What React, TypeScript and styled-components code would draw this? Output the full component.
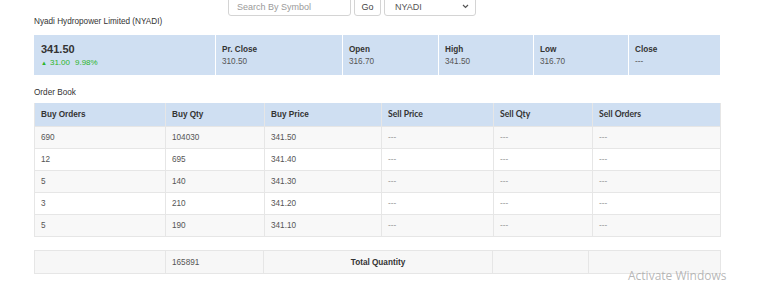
import React from "react";
import styled, { createGlobalStyle } from "styled-components";

const Global = createGlobalStyle`
  html, body { margin: 0; padding: 0; background: #fff; }
  body { font-family: "Liberation Sans", Arial, sans-serif; color: #333; overflow: hidden; }
  * { box-sizing: border-box; }
`;

const Page = styled.div`
  width: 768px;
  height: 285px;
  position: relative;
  overflow: hidden;
`;

const Container = styled.div`
  margin-left: 34px;
  width: 686px;
  display: flex;
  flex-direction: column;
`;

const SearchBar = styled.div`
  display: flex;
  gap: 3px;
  margin-left: 194px;
  margin-top: -6px;
  height: 22px;
`;

const Field = styled.div<{ $w: number }>`
  width: ${(p) => p.$w}px;
  height: 22px;
  border: 1px solid #d4d4d4;
  border-radius: 3px;
  background: #fff;
  font-size: 9px;
  display: flex;
  align-items: center;
  padding: 0 8px;
  padding-top: 3px;
  color: #555;
`;

const Placeholder = styled.span`
  color: #9a9a9a;
`;

const GoBtn = styled(Field)`
  justify-content: center;
  padding: 3px 0 0;
  color: #444;
`;

const SelectBox = styled(Field)`
  justify-content: space-between;
  padding-left: 10px;
  padding-right: 6px;
`;

const Title = styled.div`
  font-size: 8.2px;
  line-height: 12px;
  color: #333;
`;

const Panel = styled.div`
  margin-top: 7px;
  height: 40px;
  background: #cfdff2;
  display: grid;
  grid-template-columns: 181px 127px 96px 95px 95px 1fr;
`;

const PanelCell = styled.div<{ $first?: boolean }>`
  border-left: ${(p) => (p.$first ? "none" : "1px solid #fff")};
  padding: ${(p) => (p.$first ? "7px" : "9px")} 7px 0 ${(p) => (p.$first ? "7px" : "6px")};
  display: flex;
  flex-direction: column;
`;

const Price = styled.div`
  font-size: 11px;
  font-weight: bold;
  color: #333;
  line-height: 14px;
`;

const Change = styled.div`
  margin-top: 1px;
  font-size: 8px;
  color: #2cb52c;
  line-height: 12px;
  display: flex;
  align-items: center;
  gap: 3px;
`;

const Arrow = styled.span`
  font-size: 6px;
`;

const Label = styled.div`
  font-size: 8.2px;
  font-weight: bold;
  color: #333;
  line-height: 11px;
`;

const Value = styled.div`
  font-size: 8.2px;
  color: #555;
  line-height: 11px;
  margin-top: 1px;
`;

const SectionTitle = styled.div`
  margin-top: 12px;
  font-size: 8.2px;
  line-height: 12px;
  color: #333;
`;

const Table = styled.table`
  margin-top: 4px;
  width: 686px;
  border-collapse: collapse;
  table-layout: fixed;
`;

const Th = styled.th<{ $alt?: boolean }>`
  background: #cfdff2;
  height: 23px;
  text-align: left;
  padding: 0 6px;
  font-weight: bold;
  font-size: ${(p) => (p.$alt ? "8.6px" : "8.2px")};
  font-family: ${(p) => (p.$alt ? "Lato, sans-serif" : `"Liberation Sans", Arial, sans-serif`)};
  color: #333;
  border: 1px solid #e6e6e6;
  border-top: none;
`;

const Tr = styled.tr<{ $odd: boolean }>`
  background: ${(p) => (p.$odd ? "#f8f8f8" : "#fff")};
`;

const Td = styled.td<{ $dash?: boolean; $divider?: boolean }>`
  height: 22.2px;
  padding: 0 6px;
  font-size: 8.2px;
  color: ${(p) => (p.$dash ? "#999" : "#555")};
  border: 1px solid #e6e6e6;
  border-left: ${(p) => (p.$divider ? "1px solid #d6d6d6" : "1px solid #e6e6e6")};
`;

const TotalTable = styled(Table)`
  margin-top: 13px;
`;

const TotalTd = styled.td<{ $center?: boolean; $bold?: boolean }>`
  height: 23px;
  background: #f7f7f7;
  padding: 0 6px;
  font-size: 8.2px;
  color: ${(p) => (p.$bold ? "#333" : "#555")};
  font-weight: ${(p) => (p.$bold ? "bold" : "normal")};
  text-align: ${(p) => (p.$center ? "center" : "left")};
  border: 1px solid #e6e6e6;
`;

const Watermark = styled.div`
  position: absolute;
  left: 628px;
  top: 267px;
  font-family: "Open Sans", "Noto Sans", sans-serif;
  font-size: 12px;
  color: rgba(160, 160, 160, 0.75);
  white-space: nowrap;
`;

const Chevron = () => (
  <svg width="7" height="5" viewBox="0 0 7 5">
    <path d="M1 1 L3.5 3.5 L6 1" stroke="#555" strokeWidth="1.2" fill="none" />
  </svg>
);

const stats = [
  { label: "Pr. Close", value: "310.50" },
  { label: "Open", value: "316.70" },
  { label: "High", value: "341.50" },
  { label: "Low", value: "316.70" },
  { label: "Close", value: "---" },
];

const rows = [
  ["690", "104030", "341.50"],
  ["12", "695", "341.40"],
  ["5", "140", "341.30"],
  ["3", "210", "341.20"],
  ["5", "190", "341.10"],
];

const widths = [131, 99, 117, 112, 99, 128];
const totalWidths = [131, 98, 229, 96, 132];

export default function App() {
  return (
    <Page>
      <Global />
      <Container>
        <SearchBar>
          <Field $w={123}>
            <Placeholder>Search By Symbol</Placeholder>
          </Field>
          <GoBtn $w={27}>Go</GoBtn>
          <SelectBox $w={92}>
            <span>NYADI</span>
            <Chevron />
          </SelectBox>
        </SearchBar>
        <Title>Nyadi Hydropower Limited (NYADI)</Title>
        <Panel>
          <PanelCell $first>
            <Price>341.50</Price>
            <Change>
              <Arrow>▲</Arrow>
              <span>31.00</span>
              <span style={{ marginLeft: 2 }}>9.98%</span>
            </Change>
          </PanelCell>
          {stats.map((s) => (
            <PanelCell key={s.label}>
              <Label>{s.label}</Label>
              <Value>{s.value}</Value>
            </PanelCell>
          ))}
        </Panel>
        <SectionTitle>Order Book</SectionTitle>
        <Table>
          <colgroup>
            {widths.map((w, i) => (
              <col key={i} style={{ width: w }} />
            ))}
          </colgroup>
          <thead>
            <tr>
              <Th>Buy Orders</Th>
              <Th>Buy Qty</Th>
              <Th>Buy Price</Th>
              <Th $alt>Sell Price</Th>
              <Th $alt>Sell Qty</Th>
              <Th $alt>Sell Orders</Th>
            </tr>
          </thead>
          <tbody>
            {rows.map((r, i) => (
              <Tr key={i} $odd={i % 2 === 0}>
                <Td>{r[0]}</Td>
                <Td>{r[1]}</Td>
                <Td>{r[2]}</Td>
                <Td $dash $divider>---</Td>
                <Td $dash>---</Td>
                <Td $dash>---</Td>
              </Tr>
            ))}
          </tbody>
        </Table>
        <TotalTable>
          <colgroup>
            {totalWidths.map((w, i) => (
              <col key={i} style={{ width: w }} />
            ))}
          </colgroup>
          <tbody>
            <tr>
              <TotalTd></TotalTd>
              <TotalTd>165891</TotalTd>
              <TotalTd $center $bold>Total Quantity</TotalTd>
              <TotalTd></TotalTd>
              <TotalTd></TotalTd>
            </tr>
          </tbody>
        </TotalTable>
      </Container>
      <Watermark>Activate Windows</Watermark>
    </Page>
  );
}
